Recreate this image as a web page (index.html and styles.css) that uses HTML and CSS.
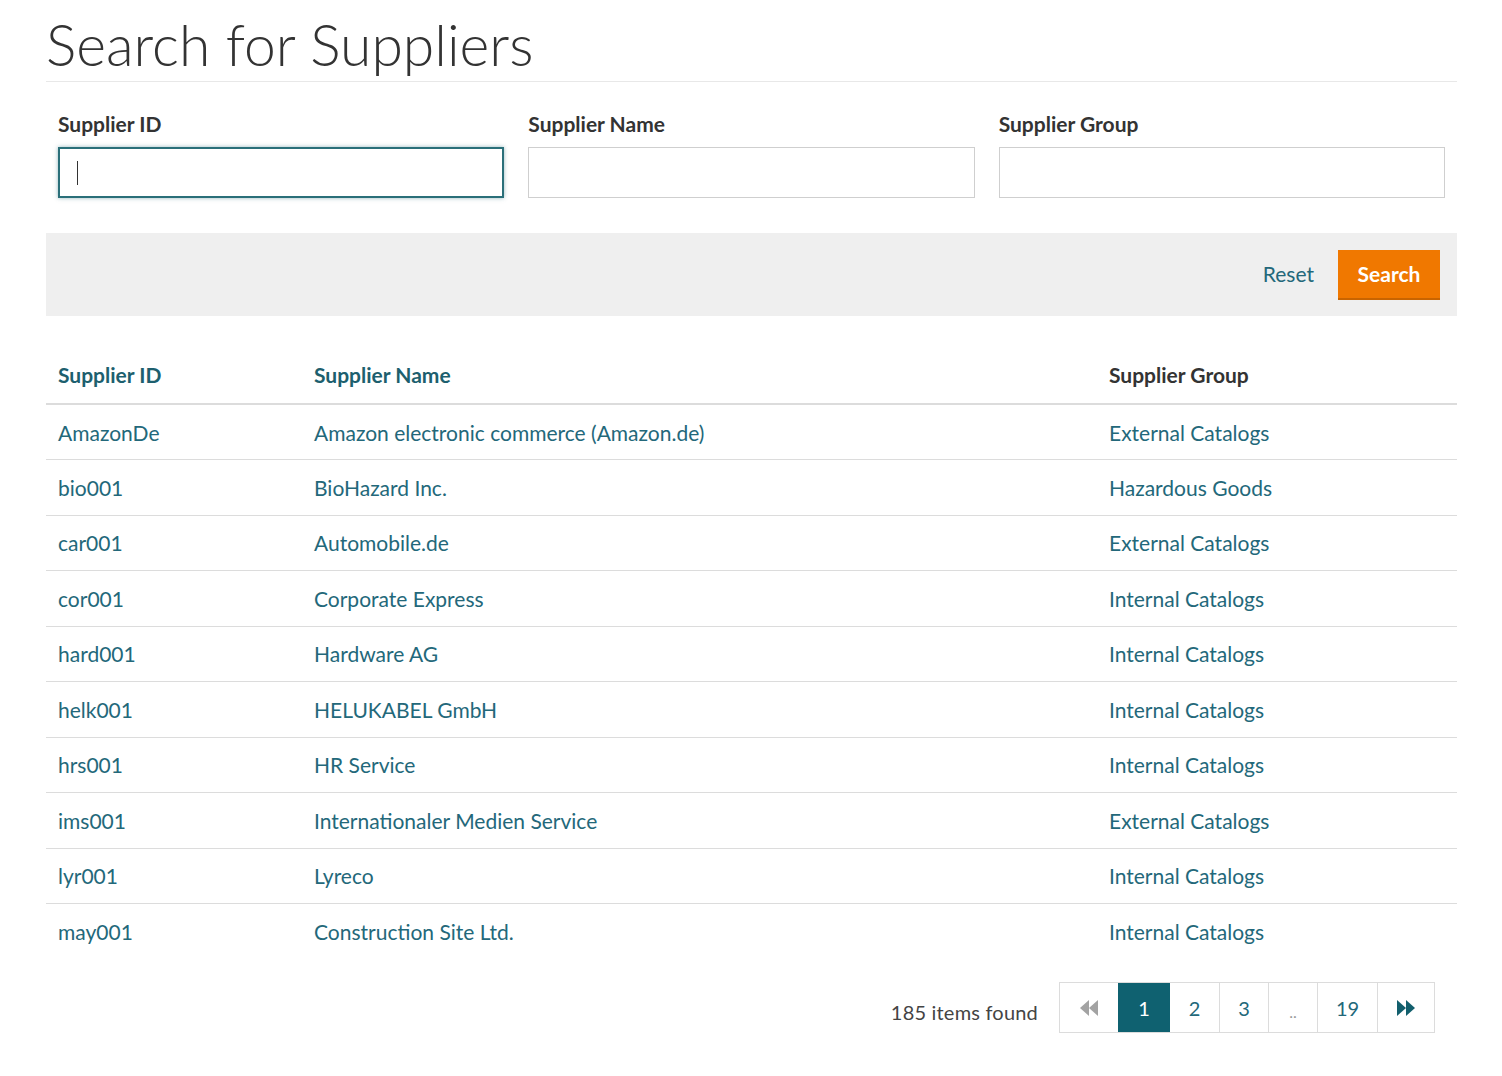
FILE: index.html
```html
<!DOCTYPE html>
<html>
<head>
<meta charset="utf-8">
<link rel="stylesheet" href="styles.css">
</head>
<body>
<div class="page">
  <h1 class="title">Search for Suppliers</h1>
  <div class="fields">
    <div class="field">
      <label class="label">Supplier ID</label>
      <div class="input focused"><span class="caret"></span></div>
    </div>
    <div class="field">
      <label class="label">Supplier Name</label>
      <div class="input"></div>
    </div>
    <div class="field">
      <label class="label">Supplier Group</label>
      <div class="input"></div>
    </div>
  </div>
  <div class="actions">
    <a class="reset">Reset</a>
    <button class="search">Search</button>
  </div>
  <table class="results">
    <thead>
      <tr>
        <th class="c1 sortable">Supplier ID</th>
        <th class="c2 sortable">Supplier Name</th>
        <th class="c3">Supplier Group</th>
      </tr>
    </thead>
    <tbody>
      <tr><td>AmazonDe</td><td>Amazon electronic commerce (Amazon.de)</td><td>External Catalogs</td></tr>
      <tr><td>bio001</td><td>BioHazard Inc.</td><td>Hazardous Goods</td></tr>
      <tr><td>car001</td><td>Automobile.de</td><td>External Catalogs</td></tr>
      <tr><td>cor001</td><td>Corporate Express</td><td>Internal Catalogs</td></tr>
      <tr><td>hard001</td><td>Hardware AG</td><td>Internal Catalogs</td></tr>
      <tr><td>helk001</td><td>HELUKABEL GmbH</td><td>Internal Catalogs</td></tr>
      <tr><td>hrs001</td><td>HR Service</td><td>Internal Catalogs</td></tr>
      <tr><td>ims001</td><td>Internationaler Medien Service</td><td>External Catalogs</td></tr>
      <tr><td>lyr001</td><td>Lyreco</td><td>Internal Catalogs</td></tr>
      <tr><td>may001</td><td>Construction Site Ltd.</td><td>Internal Catalogs</td></tr>
    </tbody>
  </table>
  <div class="footer">
    <span class="count">185 items found</span>
    <div class="pager">
      <span class="pg first disabled"><svg width="22" height="20" viewBox="0 0 22 20"><polygon points="11,2 11,18 2,10" fill="#a3a3a3"/><polygon points="20,2 20,18 11,10" fill="#a3a3a3"/></svg></span>
      <span class="pg active">1</span>
      <span class="pg n2">2</span>
      <span class="pg n3">3</span>
      <span class="pg dots">..</span>
      <span class="pg n19">19</span>
      <span class="pg last"><svg width="22" height="20" viewBox="0 0 22 20"><polygon points="2,2 2,18 11,10" fill="#125f6d"/><polygon points="11,2 11,18 20,10" fill="#125f6d"/></svg></span>
    </div>
  </div>
</div>
</body>
</html>
```
FILE: styles.css
```css
* { box-sizing: border-box; }
html, body { margin: 0; padding: 0; background: #fff; }
body { font-family: Lato, "Open Sans", sans-serif; color: #333; }
.page { width: 1411px; margin-left: 46px; }
.title {
  margin: 0;
  padding: 12px 0 5px 0;
  font-size: 57px;
  font-weight: 300;
  line-height: 64px;
  color: #333;
  border-bottom: 1px solid #e8e8e8;
}
.fields {
  display: grid;
  grid-template-columns: repeat(3, 1fr);
  column-gap: 24px;
  padding: 30px 12px 0 12px;
}
.label {
  display: block;
  font-size: 21px;
  font-weight: 700;
  color: #333;
  line-height: 24px;
  margin-bottom: 11px;
}
.input {
  height: 51px;
  border: 1px solid #cfcfcf;
  background: #fff;
  position: relative;
}
.input.focused {
  border: 2px solid #2a6f79;
  box-shadow: 0 0 4px rgba(42, 111, 121, 0.5);
}
.caret {
  position: absolute;
  left: 17px;
  top: 12px;
  width: 1px;
  height: 24px;
  background: #333;
}
.actions {
  margin-top: 35px;
  height: 83px;
  background: #efefef;
  display: flex;
  align-items: center;
  justify-content: flex-end;
  padding-right: 17px;
}
.reset {
  font-size: 21px;
  color: #23687a;
  margin-right: 24px;
  cursor: pointer;
  padding-bottom: 2px;
}
.search {
  font-family: Lato, sans-serif;
  font-size: 21px;
  font-weight: 700;
  color: #fff;
  background: #f07800;
  border: none;
  border-bottom: 2px solid #c96400;
  width: 102px;
  height: 50px;
  padding: 0;
  cursor: pointer;
}
.results {
  width: 100%;
  border-collapse: collapse;
  margin-top: 34px;
}
.results th {
  text-align: left;
  font-size: 21px;
  font-weight: 700;
  color: #333;
  padding: 10px 12px 15px 12px;
  height: 54px;
  border-bottom: 2px solid #dcdcdc;
  vertical-align: middle;
}
.results th.sortable { color: #1d5f6e; }
.results th.c1 { width: 256px; }
.results th.c3 { width: 360px; }
.results td {
  font-size: 21px;
  color: #23687a;
  padding: 0 12px;
  height: 55.5px;
  border-bottom: 1px solid #dcdcdc;
  vertical-align: middle;
}
.results tbody tr:last-child td { border-bottom: none; }
.footer {
  display: flex;
  justify-content: flex-end;
  align-items: center;
  padding-right: 22px;
  margin-top: 23px;
}
.count {
  font-size: 20px;
  letter-spacing: 0.2px;
  color: #444;
  margin-right: 21px;
  padding-top: 8px;
}
.pager {
  display: flex;
  border: 1px solid #dcdcdc;
  height: 51px;
}
.pg {
  display: flex;
  align-items: center;
  justify-content: center;
  font-size: 20px;
  color: #23687a;
  border-left: 1px solid #dcdcdc;
  width: 49px;
}
.pg.first { border-left: none; width: 58px; }
.pg.active { background: #0f6170; color: #fff; width: 52px; border-left: none; }
.pg.n2 { border-left: none; }
.pg.n19 { width: 60px; }
.pg.last { width: 57px; }
.pg.dots { color: #999; font-size: 16px; padding-top: 8px; }
```
